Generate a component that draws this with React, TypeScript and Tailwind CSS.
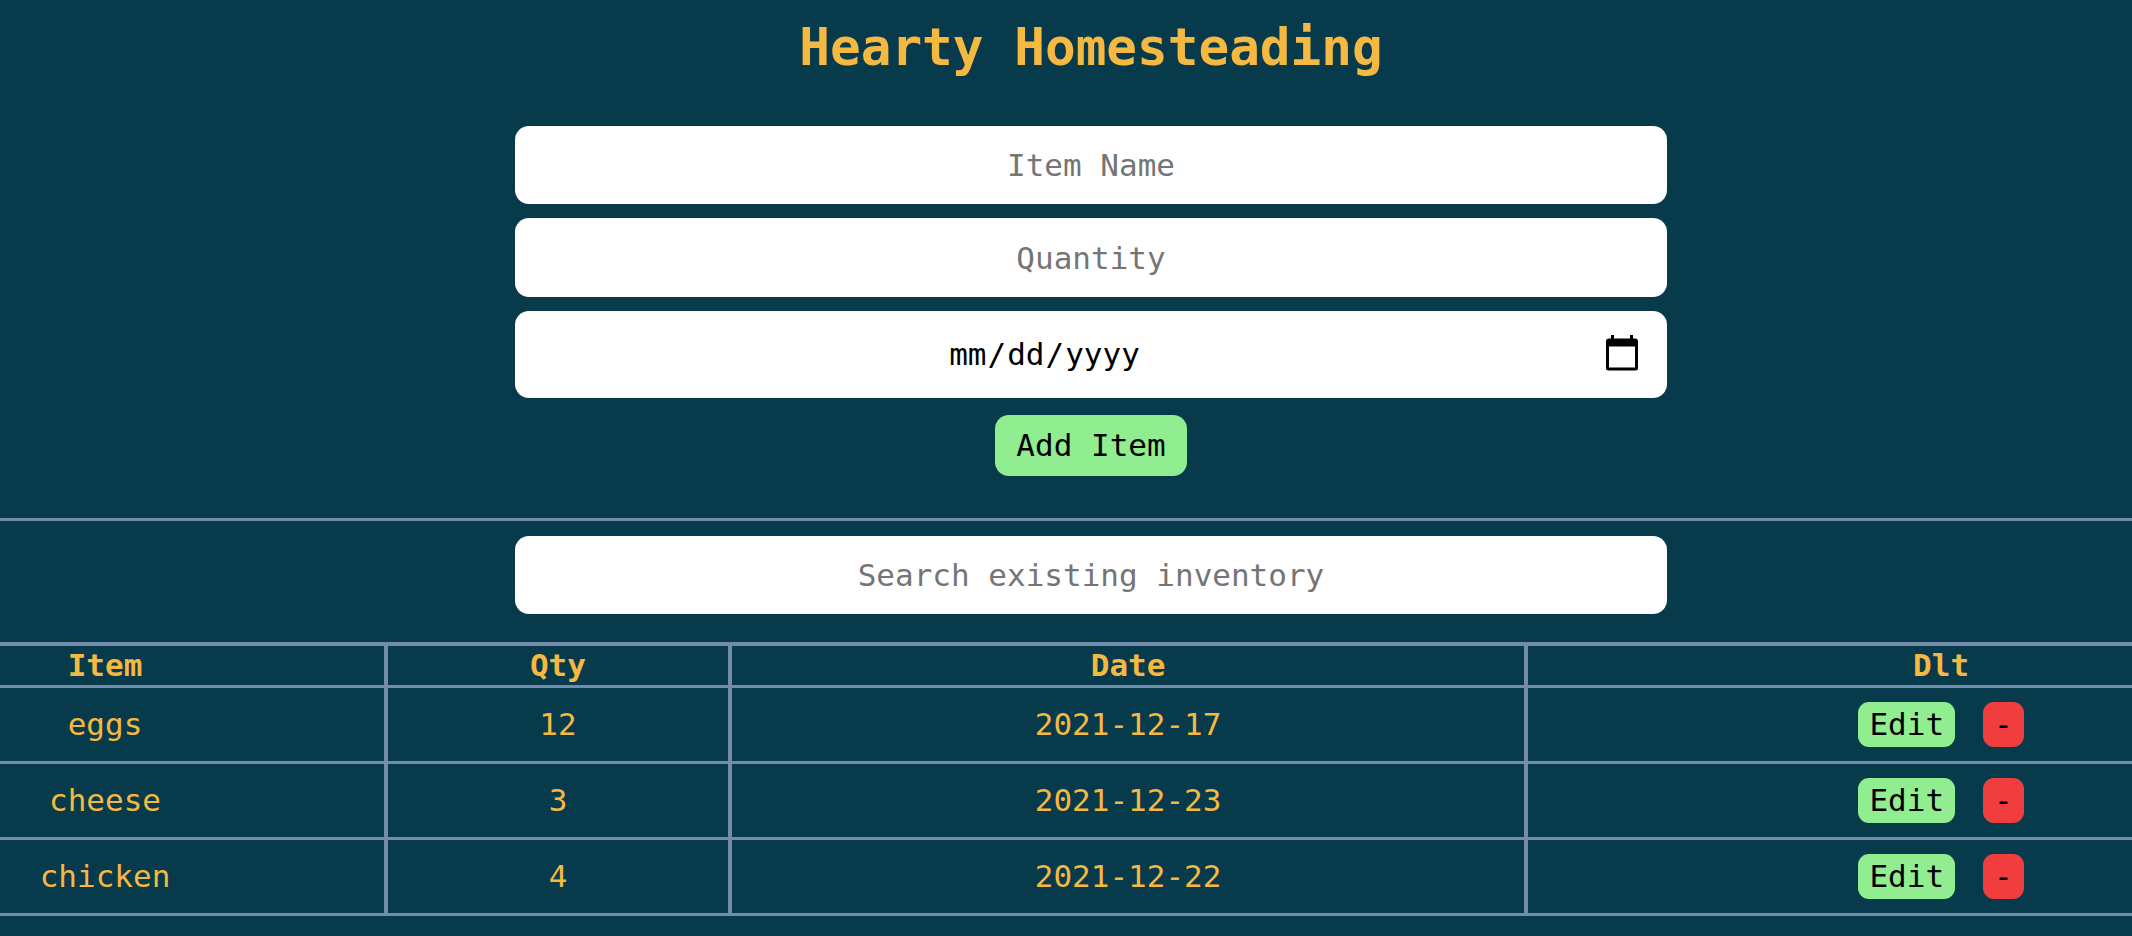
type Item = { name: string; qty: number; date: string };

const items: Item[] = [
  { name: "eggs", qty: 12, date: "2021-12-17" },
  { name: "cheese", qty: 3, date: "2021-12-23" },
  { name: "chicken", qty: 4, date: "2021-12-22" },
];

const field =
  "block w-[54vw] rounded-[14px] bg-white px-6 text-center text-black placeholder:text-[#757575] placeholder:opacity-100";

const cell = "border-b-3 border-[#748cab]";
const ruled = "border-r-4";

export default function App() {
  return (
    <div className="min-h-screen overflow-x-hidden bg-[#073b4c] font-['DejaVu_Sans_Mono',monospace] text-[31px] leading-[39px] text-[#f5b841]">
      <header className="flex justify-center pt-4 pl-[50px]">
        <h1 className="text-[51px] leading-[64px] font-bold">Hearty Homesteading</h1>
      </header>

      <form
        className="flex flex-col items-center gap-3.5 border-b-3 border-[#748cab] pt-[46px] pb-[42px] pl-[50px]"
        onSubmit={(e) => e.preventDefault()}
      >
        <input type="text" aria-label="Item Name" placeholder="Item Name" className={`${field} h-[78px]`} />
        <input type="text" aria-label="Quantity" placeholder="Quantity" className={`${field} h-[79px]`} />
        <div className="relative">
          <input
            type="date"
            aria-label="Date"
            className={`${field} h-[87px] [&::-webkit-calendar-picker-indicator]:m-0 [&::-webkit-calendar-picker-indicator]:ml-[50px] [&::-webkit-calendar-picker-indicator]:h-[43px] [&::-webkit-calendar-picker-indicator]:w-[43px] [&::-webkit-calendar-picker-indicator]:p-0 [&::-webkit-calendar-picker-indicator]:opacity-0 [&::-webkit-datetime-edit]:block [&::-webkit-datetime-edit]:text-center`}
          />
          <svg
            viewBox="0 0 32 36"
            className="pointer-events-none absolute top-6 right-[29px] h-9 w-8"
            aria-hidden="true"
          >
            <path
              fillRule="evenodd"
              d="M5 0h3v3.500h16V0h3v3.500h2a3 3 0 0 1 3 3V33a2.500 2.500 0 0 1-2.500 2.500h-27A2.500 2.500 0 0 1 0 33V6.500a3 3 0 0 1 3-3h2zM3 11.500v21h26v-21z"
            />
          </svg>
        </div>
        <button type="submit" className="mt-[3px] h-[61px] rounded-[14px] bg-[#90ee90] px-[21px] text-black">
          Add Item
        </button>
      </form>

      <div className="flex justify-center pt-[15px] pb-7 pl-[50px]">
        <input
          type="text"
          aria-label="Search existing inventory"
          placeholder="Search existing inventory"
          className={`${field} h-[78px]`}
        />
      </div>

      <table className="w-full table-fixed border-separate border-spacing-0 border-t-4 border-[#748cab] text-center">
        <colgroup>
          <col className="w-[18.2%]" />
          <col className="w-[16.13%]" />
          <col className="w-[37.35%]" />
          <col />
        </colgroup>
        <thead>
          <tr className="h-[42px]">
            <th className={`${cell} ${ruled} pr-[174px]`}>Item</th>
            <th className={`${cell} ${ruled}`}>Qty</th>
            <th className={`${cell} ${ruled}`}>Date</th>
            <th className={`${cell} pl-[222px]`}>Dlt</th>
          </tr>
        </thead>
        <tbody>
          {items.map((item) => (
            <tr key={item.name} className="h-[76px]">
              <td className={`${cell} ${ruled} pr-[174px]`}>{item.name}</td>
              <td className={`${cell} ${ruled}`}>{item.qty}</td>
              <td className={`${cell} ${ruled}`}>{item.date}</td>
              <td className={`${cell} pl-[222px]`}>
                <div className="flex justify-center gap-7 text-black">
                  <button type="button" className="h-[45px] rounded-[11px] bg-[#90ee90] px-[11px]">
                    Edit
                  </button>
                  <button
                    type="button"
                    aria-label={`Delete ${item.name}`}
                    className="h-[45px] rounded-[11px] bg-[#f03e3e] px-[11px]"
                  >
                    -
                  </button>
                </div>
              </td>
            </tr>
          ))}
        </tbody>
      </table>
    </div>
  );
}
